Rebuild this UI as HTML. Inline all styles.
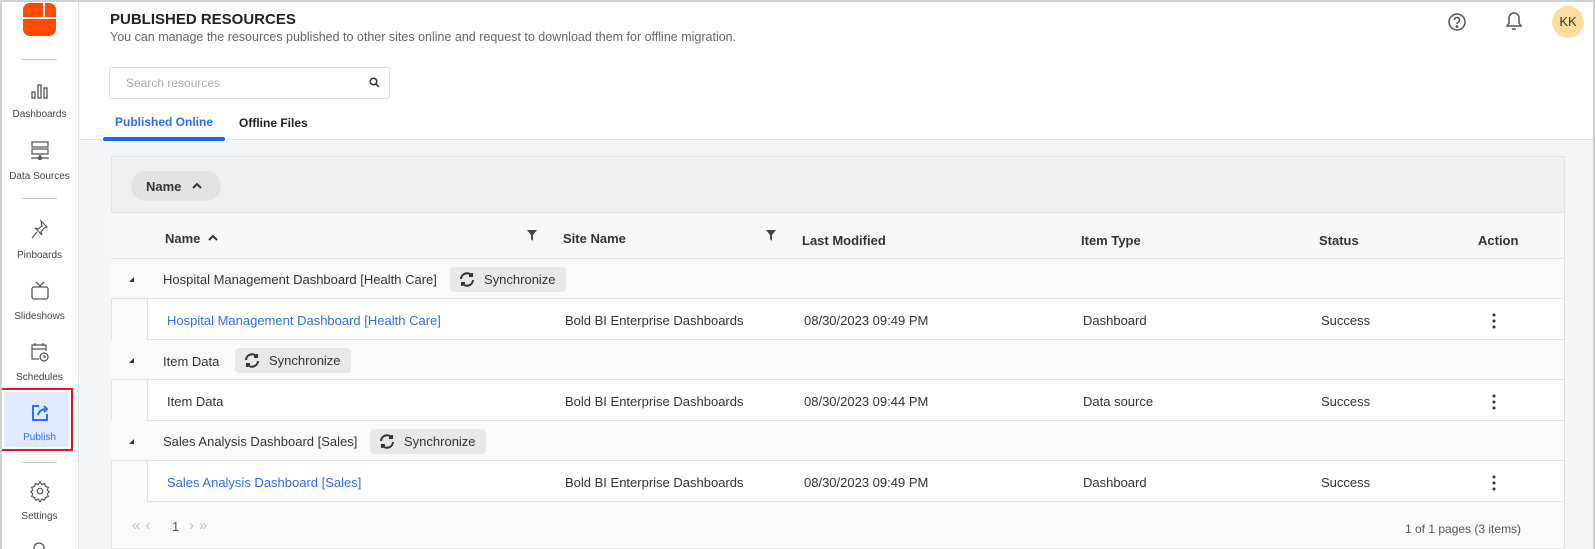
<!DOCTYPE html>
<html><head><meta charset="utf-8"><style>
*{box-sizing:border-box;margin:0;padding:0}
body{width:1595px;height:549px;overflow:hidden;font-family:"Liberation Sans",Arial,sans-serif;color:#333;background:#fff;position:relative}
.a{position:absolute;white-space:nowrap}
.frame{position:absolute;left:0;top:0;width:1595px;height:549px;border:2px solid #d0d0d0;border-bottom:none;pointer-events:none}
.side{left:0;top:0;width:79px;height:549px;background:#fff;border-right:1px solid #ddd}
.nav{position:absolute;left:0;width:79px;text-align:center;font-size:10px;color:#444}
.nav svg{display:block;margin:0 auto 9px}
.sep{position:absolute;left:22px;width:35px;height:1px;background:#c8c8c8}
.t13{font-size:13px}
.row{position:absolute;left:111px;width:1453px;border-bottom:1px solid #e2e2e2}
.g{background:#fafafa}
.c{background:#fff;left:147px;width:1417px;border-left:1px solid #e2e2e2}
.sync{position:absolute;height:25px;background:#e8e8e8;border-radius:4px;font-size:13px;color:#333;padding:5px 10px 0 34px}
.sync svg{position:absolute;left:9px;top:5px}
.tri{position:absolute;left:129px;width:0;height:0;border-left:5px solid transparent;border-bottom:5px solid #333}
.lnk{color:#2f6ef5}
.th{font-weight:bold;color:#333}
</style></head><body>
<div class="a side">
 <svg class="a" style="left:23px;top:3px" width="33" height="33" viewBox="0 0 33 33">
  <path d="M0 7a7 7 0 0 1 7-7h13v14H0z" fill="#ff4a00"/>
  <path d="M22 0h4a7 7 0 0 1 7 7v7H22z" fill="#ff4a00"/>
  <path d="M0 16h33v10a7 7 0 0 1-7 7H7a7 7 0 0 1-7-7z" fill="#ff4a00"/>
 </svg>
 <div class="sep" style="top:59px"></div>
 <div class="nav" style="top:82px"><svg width="20" height="18" viewBox="0 0 20 18" fill="none" stroke="#555" stroke-width="1.3"><rect x="2" y="10" width="3" height="6"/><rect x="8" y="3" width="3" height="13"/><rect x="14" y="6" width="3" height="10"/></svg>Dashboards</div>
 <div class="nav" style="top:141px"><svg width="22" height="21" viewBox="0 0 22 21" fill="none" stroke="#555" stroke-width="1.2"><rect x="3" y="1" width="16" height="5"/><rect x="3" y="8" width="16" height="5"/><path d="M11 13v4M2 17h18"/><circle cx="11" cy="17" r="1.5" fill="#555"/></svg>Data Sources</div>
 <div class="sep" style="top:198px"></div>
 <div class="nav" style="top:219px"><svg width="20" height="22" viewBox="0 0 20 22" fill="none" stroke="#555" stroke-width="1.2"><path d="M11 2l6 6-3 1-3 4 1 3-7-7 3 1 4-3z M7 13l-5 6"/></svg>Pinboards</div>
 <div class="nav" style="top:280px"><svg width="20" height="22" viewBox="0 0 20 22" fill="none" stroke="#555" stroke-width="1.3"><rect x="2" y="7" width="16" height="12" rx="2"/><path d="M6 2l4 4 4-4"/></svg>Slideshows</div>
 <div class="nav" style="top:341px"><svg width="22" height="22" viewBox="0 0 22 22" fill="none" stroke="#555" stroke-width="1.2"><path d="M10 18H3V4h14v6M3 8h14M6 2v3M14 2v3"/><circle cx="15" cy="16" r="4"/><path d="M15 14v2h2"/></svg>Schedules</div>
 <div class="a" style="left:0;top:388px;width:73px;height:63px;border:2px solid #e51919"></div>
 <div class="a" style="left:4px;top:392px;width:65px;height:55px;background:#dfeafe"></div>
 <div class="nav" style="top:403px;color:#2f6ef5"><svg width="20" height="20" viewBox="0 0 20 20" fill="none" stroke="#2f6ef5" stroke-width="2"><path d="M9 3H3v14h14v-6"/><path d="M8 12c1-4 4-6 9-6M14 3l3 3-3 3"/></svg>Publish</div>
 <div class="sep" style="top:462px"></div>
 <div class="nav" style="top:480px"><svg width="22" height="22" viewBox="0 0 24 24" fill="none" stroke="#555" stroke-width="1.3"><circle cx="12" cy="12" r="3"/><path d="M12 2l2 3 3-1 1 3 3 1-1 3 2 2-2 2 1 3-3 1-1 3-3-1-2 3-2-3-3 1-1-3-3-1 1-3-2-2 2-2-1-3 3-1 1-3 3 1z"/></svg>Settings</div>
 <svg class="a" style="left:30px;top:540px" width="18" height="9"><circle cx="9" cy="8" r="5" fill="none" stroke="#555" stroke-width="1.3"/></svg>
</div>

<div class="a" style="left:110px;top:11px;font-size:15px;font-weight:bold;color:#222">PUBLISHED RESOURCES</div>
<div class="a" style="left:110px;top:30px;font-size:12.5px;color:#666">You can manage the resources published to other sites online and request to download them for offline migration.</div>
<svg class="a" style="left:1447px;top:12px" width="20" height="20" viewBox="0 0 20 20" fill="none" stroke="#555" stroke-width="1.5"><circle cx="10" cy="10" r="8"/><path d="M7.5 8a2.5 2.5 0 1 1 3.5 2.3c-.7.4-1 .8-1 1.7"/><circle cx="10" cy="14.5" r=".6" fill="#555"/></svg>
<svg class="a" style="left:1503px;top:10px" width="22" height="22" viewBox="0 0 22 22" fill="none" stroke="#555" stroke-width="1.5"><path d="M4 16h14l-2-3V8a5 5 0 0 0-10 0v5z"/><path d="M9 19h4"/></svg>
<div class="a" style="left:1552px;top:6px;width:32px;height:32px;border-radius:50%;background:#fedc9d;font-size:13px;color:#333;text-align:center;line-height:32px">KK</div>

<div class="a" style="left:109px;top:67px;width:281px;height:32px;border:1px solid #ddd;border-radius:3px"></div>
<div class="a" style="left:126px;top:76px;font-size:12px;color:#aaa">Search resources</div>
<svg class="a" style="left:369px;top:77px" width="11" height="11" viewBox="0 0 11 11" fill="none" stroke="#333" stroke-width="1.5"><circle cx="4.5" cy="4.5" r="3.3"/><path d="M7 7l3 3"/></svg>
<div class="a" style="left:115px;top:115px;font-size:12px;font-weight:bold;color:#2f6ef5">Published Online</div>
<div class="a" style="left:239px;top:116px;font-size:12px;font-weight:bold;color:#222">Offline Files</div>
<div class="a" style="left:80px;top:139px;width:1515px;height:410px;background:#f3f6f9;border-top:1px solid #e0e0e0"></div>
<div class="a" style="left:103px;top:137px;width:122px;height:4px;border-radius:2px;background:#1a62f0"></div>

<div class="a" style="left:111px;top:156px;width:1454px;height:393px;background:#fafafa;border:1px solid #e2e2e2"></div>
<div class="a" style="left:112px;top:157px;width:1452px;height:56px;background:#f0f0f0;border-bottom:1px solid #e2e2e2"></div>
<div class="a" style="left:131px;top:171px;width:90px;height:30px;border-radius:15px;background:#e2e2e2"></div>
<div class="a t13" style="left:146px;top:179px;font-weight:bold;color:#333">Name</div>
<svg class="a" style="left:191px;top:181px" width="12" height="9"><path d="M2 7l4-4 4 4" fill="none" stroke="#333" stroke-width="2"/></svg>

<div class="row" style="top:213px;height:46px;background:#f8f8f8"></div>
<div class="a t13 th" style="left:165px;top:231px">Name</div>
<svg class="a" style="left:207px;top:233px" width="12" height="9"><path d="M2 7l4-4 4 4" fill="none" stroke="#333" stroke-width="2"/></svg>
<svg class="a" style="left:527px;top:230px" width="10" height="11"><path d="M0 0h10L6 5v6L4 9V5z" fill="#444"/></svg>
<div class="a t13 th" style="left:563px;top:231px">Site Name</div>
<svg class="a" style="left:766px;top:230px" width="10" height="11"><path d="M0 0h10L6 5v6L4 9V5z" fill="#444"/></svg>
<div class="a t13 th" style="left:802px;top:233px">Last Modified</div>
<div class="a t13 th" style="left:1081px;top:233px">Item Type</div>
<div class="a t13 th" style="left:1319px;top:233px">Status</div>
<div class="a t13 th" style="left:1478px;top:233px">Action</div>

<div class="row g" style="top:259px;height:40px"></div>
<div class="tri" style="top:277px"></div>
<div class="a t13" style="left:163px;top:272px">Hospital Management Dashboard [Health Care]</div>
<div class="sync" style="left:450px;top:267px">Synchronize<svg width="16" height="15" viewBox="0 0 16 15" fill="none" stroke="#333" stroke-width="2"><path d="M2 7a6 6 0 0 1 11-3M14 8a6 6 0 0 1-11 3"/><path d="M13 1v3h-3M3 14v-3h3"/></svg></div>
<div class="row c" style="top:299px;height:41px"></div>
<div class="a t13 lnk" style="left:167px;top:313px">Hospital Management Dashboard [Health Care]</div>
<div class="a t13" style="left:565px;top:313px">Bold BI Enterprise Dashboards</div>
<div class="a t13" style="left:804px;top:313px">08/30/2023 09:49 PM</div>
<div class="a t13" style="left:1083px;top:313px">Dashboard</div>
<div class="a t13" style="left:1321px;top:313px">Success</div>

<div class="row g" style="top:340px;height:40px"></div>
<div class="tri" style="top:358px"></div>
<div class="a t13" style="left:163px;top:354px">Item Data</div>
<div class="sync" style="left:235px;top:348px">Synchronize<svg width="16" height="15" viewBox="0 0 16 15" fill="none" stroke="#333" stroke-width="2"><path d="M2 7a6 6 0 0 1 11-3M14 8a6 6 0 0 1-11 3"/><path d="M13 1v3h-3M3 14v-3h3"/></svg></div>
<div class="row c" style="top:380px;height:41px"></div>
<div class="a t13" style="left:167px;top:394px">Item Data</div>
<div class="a t13" style="left:565px;top:394px">Bold BI Enterprise Dashboards</div>
<div class="a t13" style="left:804px;top:394px">08/30/2023 09:44 PM</div>
<div class="a t13" style="left:1083px;top:394px">Data source</div>
<div class="a t13" style="left:1321px;top:394px">Success</div>

<div class="row g" style="top:421px;height:40px"></div>
<div class="tri" style="top:439px"></div>
<div class="a t13" style="left:163px;top:434px">Sales Analysis Dashboard [Sales]</div>
<div class="sync" style="left:370px;top:429px">Synchronize<svg width="16" height="15" viewBox="0 0 16 15" fill="none" stroke="#333" stroke-width="2"><path d="M2 7a6 6 0 0 1 11-3M14 8a6 6 0 0 1-11 3"/><path d="M13 1v3h-3M3 14v-3h3"/></svg></div>
<div class="row c" style="top:461px;height:41px"></div>
<div class="a t13 lnk" style="left:167px;top:475px">Sales Analysis Dashboard [Sales]</div>
<div class="a t13" style="left:565px;top:475px">Bold BI Enterprise Dashboards</div>
<div class="a t13" style="left:804px;top:475px">08/30/2023 09:49 PM</div>
<div class="a t13" style="left:1083px;top:475px">Dashboard</div>
<div class="a t13" style="left:1321px;top:475px">Success</div>

<svg class="a" style="left:1492px;top:313px" width="4" height="16"><circle cx="2" cy="2" r="1.5" fill="#333"/><circle cx="2" cy="8" r="1.5" fill="#333"/><circle cx="2" cy="14" r="1.5" fill="#333"/></svg>
<svg class="a" style="left:1492px;top:394px" width="4" height="16"><circle cx="2" cy="2" r="1.5" fill="#333"/><circle cx="2" cy="8" r="1.5" fill="#333"/><circle cx="2" cy="14" r="1.5" fill="#333"/></svg>
<svg class="a" style="left:1492px;top:475px" width="4" height="16"><circle cx="2" cy="2" r="1.5" fill="#333"/><circle cx="2" cy="8" r="1.5" fill="#333"/><circle cx="2" cy="14" r="1.5" fill="#333"/></svg>

<div class="a" style="left:132px;top:517px;font-size:15px;color:#c4c4c4;letter-spacing:5px">«‹</div>
<div class="a t13" style="left:172px;top:519px;color:#555">1</div>
<div class="a" style="left:189px;top:517px;font-size:15px;color:#c4c4c4;letter-spacing:5px">›»</div>
<div class="a" style="left:1405px;top:522px;font-size:12px;color:#555">1 of 1 pages (3 items)</div>
<div class="frame"></div>
</body></html>
